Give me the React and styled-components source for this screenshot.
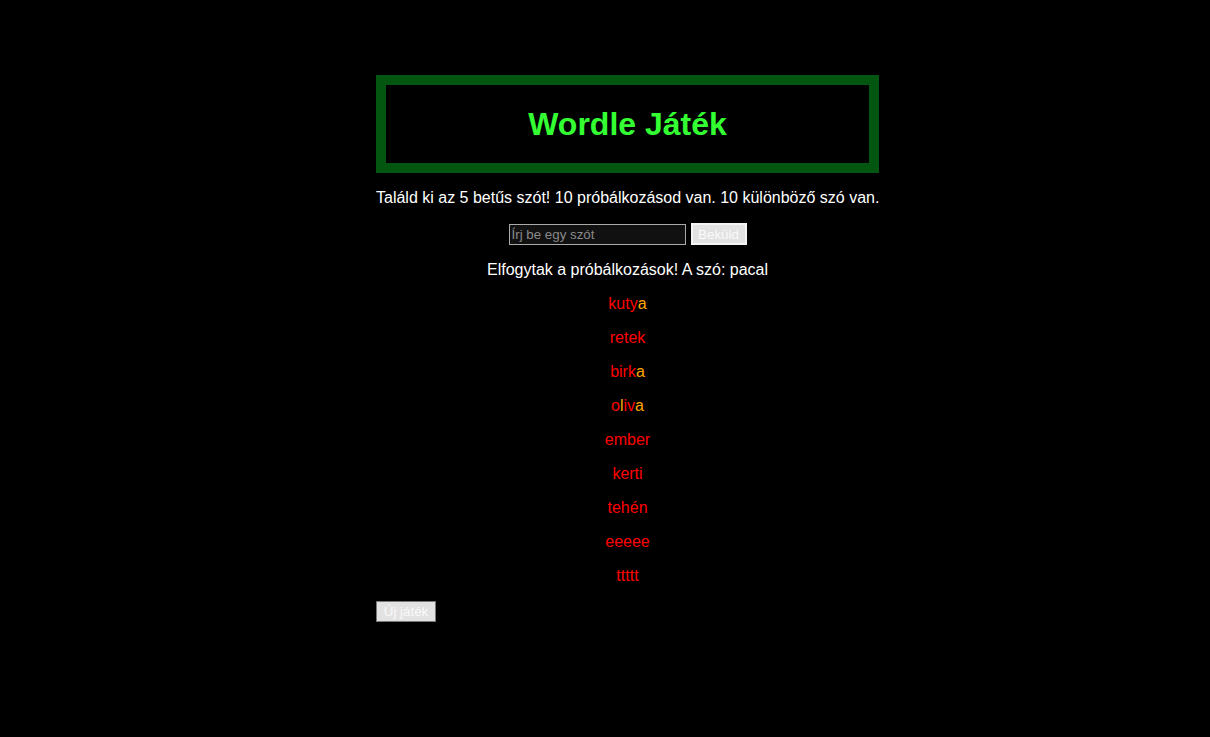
import React from "react";
import styled, { createGlobalStyle } from "styled-components";

const Global = createGlobalStyle`
  html, body { margin: 0; padding: 0; background: #000; }
  body { font-family: "Liberation Sans", Arial, sans-serif; color: #fff; }
`;

const Page = styled.div`
  width: 503px;
  margin-left: calc(50% - 229px);
  padding-top: 75px;
`;

const Header = styled.header`
  border: 10px solid #03560f;
  height: 78px;
  display: flex;
  align-items: center;
  justify-content: center;
`;

const Title = styled.h1`
  margin: 0;
  font-size: 32px;
  font-weight: bold;
  color: #33ff33;
`;

const Text = styled.p`
  margin: 16px 0;
  font-size: 16px;
  line-height: 18px;
  text-align: center;
  white-space: nowrap;
  color: #fff;
`;

const Form = styled.div`
  display: flex;
  justify-content: center;
  align-items: center;
  gap: 5px;
  height: 22px;
`;

const Input = styled.input`
  box-sizing: border-box;
  width: 177px;
  height: 21px;
  background: #111;
  border: 1px solid #aaa;
  color: #fff;
  font-family: "Liberation Sans", Arial, sans-serif;
  font-size: 13.33px;
  padding: 1px 2px;
  &::placeholder { color: #8a8a8a; }
`;

const Button = styled.button`
  box-sizing: border-box;
  height: ${(p) => p.$h || 21}px;
  width: ${(p) => p.$w}px;
  padding: 0;
  background: #e2e2e2;
  border: ${(p) => (p.$outline ? "2px solid #f4f4f4" : "1px solid #777")};
  color: #fafafa;
  font-family: "Liberation Sans", Arial, sans-serif;
  font-size: 13.33px;
  cursor: pointer;
`;

const Word = styled.p`
  margin: 16px 0;
  font-size: 16px;
  line-height: 18px;
  text-align: center;
`;

const Letter = styled.span`
  color: ${(p) => (p.$c === "o" ? "#ffa500" : "#ff0000")};
`;

const Footer = styled.div`
  margin-top: 16px;
`;

const guesses = [
  ["kutya", "rrrro"],
  ["retek", "rrrrr"],
  ["birka", "rrrro"],
  ["oliva", "rorro"],
  ["ember", "rrrrr"],
  ["kerti", "rrrrr"],
  ["tehén", "rrrrr"],
  ["eeeee", "rrrrr"],
  ["ttttt", "rrrrr"],
];

export default function App() {
  return (
    <>
      <Global />
      <Page>
        <Header>
          <Title>Wordle Játék</Title>
        </Header>
        <Text>Találd ki az 5 betűs szót! 10 próbálkozásod van. 10 különböző szó van.</Text>
        <Form>
          <Input placeholder="Írj be egy szót" />
          <Button $outline $h={22} $w={56}>Beküld</Button>
        </Form>
        <Text>Elfogytak a próbálkozások! A szó: pacal</Text>
        {guesses.map(([w, c]) => (
          <Word key={w}>
            {[...w].map((ch, i) => (
              <Letter key={i} $c={c[i]}>{ch}</Letter>
            ))}
          </Word>
        ))}
        <Footer>
          <Button $w={60}>Új játék</Button>
        </Footer>
      </Page>
    </>
  );
}
